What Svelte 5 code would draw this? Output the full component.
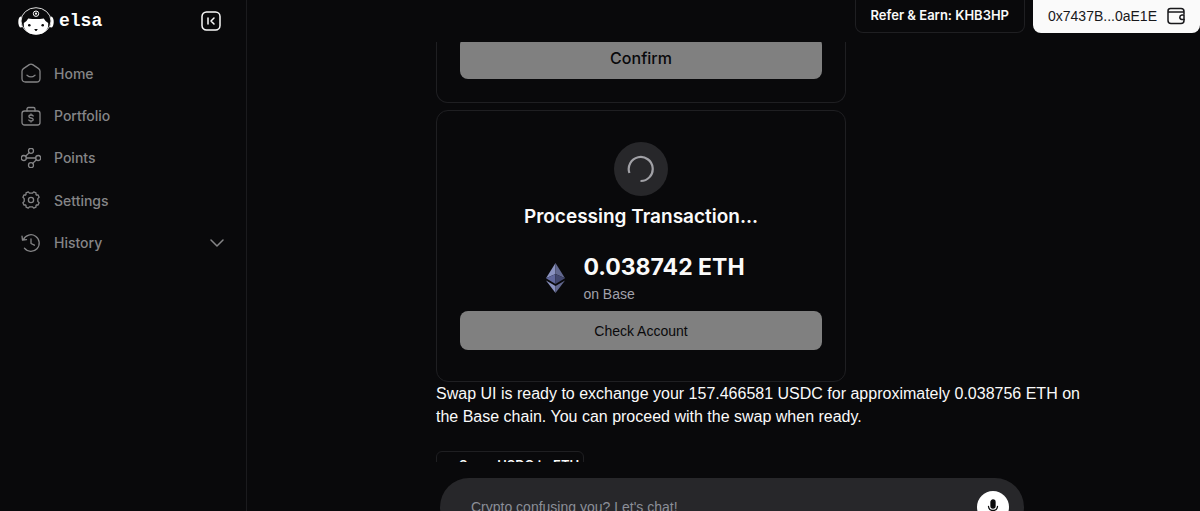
<script>
    let message = "";
    let historyOpen = false;
    let collapsed = false;

    const links = [
        { name: "Home", icon: "home" },
        { name: "Portfolio", icon: "portfolio" },
        { name: "Points", icon: "points" },
        { name: "Settings", icon: "settings" }
    ];

    const swap = {
        amount: "0.038742 ETH",
        chain: "Base",
        text: "Swap UI is ready to exchange your 157.466581 USDC for approximately 0.038756 ETH on the Base chain. You can proceed with the swap when ready."
    };

    function toggleHistory(){
        historyOpen = !historyOpen;
    }
</script>

<div class="page">
<aside class:collapsed>
    <div class="brand">
        <a class="logo" href="#home" aria-label="elsa">
            <svg width="36" height="28" viewBox="0 0 36 28">
                <ellipse cx="2.800" cy="15" rx="2.500" ry="5.500" fill="#fff"/>
                <ellipse cx="33.200" cy="15" rx="2.500" ry="5.500" fill="#fff"/>
                <ellipse cx="18" cy="14" rx="15" ry="13.300" fill="#0a0a0b" stroke="#ddd" stroke-width="1"/>
                <path d="M5.800 16Q8.500 14.800 10.200 11.400Q18 12.600 25.800 11.400Q27.500 14.800 30.200 16Q30.900 20 28.500 23Q25 27.600 18 27.600Q11 27.600 7.500 23Q5.100 20 5.800 16Z" fill="#fff"/>
                <circle cx="18" cy="6.700" r="2.700" fill="none" stroke="#fff" stroke-width="1"/>
                <circle cx="18" cy="6.700" r="1.100" fill="#fff"/>
                <circle cx="11.300" cy="18.200" r="1.300" fill="#0a0a0b"/>
                <circle cx="24.700" cy="18.200" r="1.300" fill="#0a0a0b"/>
                <path d="M16.200 22H19.800L18.500 24H17.500Z" fill="#0a0a0b"/>
            </svg>
            <span>elsa</span>
        </a>
        <button class="collapse" aria-label="Collapse menu" on:click={() => collapsed = !collapsed}>
            <svg width="20" height="20" viewBox="0 0 20 20" fill="none" stroke="currentColor" stroke-width="1.500" stroke-linecap="round" stroke-linejoin="round">
                <rect x="1" y="1" width="18" height="18" rx="4.500"/>
                <path d="M7 7V13M13 7L10 10L13 13"/>
            </svg>
        </button>
    </div>

    <nav>
        {#each links as link}
            <a href="#{link.icon}">
                <svg width="20" height="20" viewBox="0 0 20 20" fill="none" stroke="currentColor" stroke-width="1.300" stroke-linecap="round" stroke-linejoin="round">
                    {#if link.icon == "home"}
                        <path d="M1 8.200Q1 6.600 2.400 5.600L8.300 1.600Q10 .5 11.700 1.600L17.600 5.600Q19 6.600 19 8.200V15.500Q19 19 15.500 19H4.500Q1 19 1 15.500Z"/>
                        <path d="M6 12.200Q10 15.600 14 12.200"/>
                    {:else if link.icon == "portfolio"}
                        <rect x="1" y="5" width="18" height="14" rx="2.500"/>
                        <path d="M6 5V3Q6 1.500 7.500 1.500H12.500Q14 1.500 14 3V5"/>
                        <path d="M12.200 10Q11.800 9 10 9Q7.900 9 7.900 10.500Q7.900 11.700 10 12Q12.200 12.300 12.200 13.500Q12.200 15 10 15Q8.200 15 7.800 14M10 7.900V9M10 15V16.100"/>
                    {:else if link.icon == "points"}
                        <circle cx="10" cy="2.800" r="2.500"/>
                        <circle cx="2.800" cy="10" r="2.500"/>
                        <circle cx="17.200" cy="10" r="2.500"/>
                        <circle cx="10" cy="17.200" r="2.500"/>
                        <path d="M8.300 4.600L4.600 8.200M5.300 10H14.700M15.400 11.800L11.700 15.400"/>
                    {:else}
                        <circle cx="10" cy="10" r="2.600"/>
                        <path d="M8.600 3.200H11.400L12.700 1.900L15 2.900V4.600L15.400 5H17.100L18.100 7.300L16.800 8.600V11.400L18.100 12.700L17.100 15H15.400L15 15.400V17.100L12.700 18.100L11.400 16.800H8.600L7.300 18.100L5 17.100V15.400L4.600 15H2.900L1.900 12.700L3.200 11.400V8.600L1.900 7.300L2.900 5H4.600L5 4.600V2.900L7.300 1.900Z"/>
                    {/if}
                </svg>
                <span>{link.name}</span>
            </a>
        {/each}
        <button aria-expanded={historyOpen} on:click={toggleHistory}>
            <svg width="20" height="20" viewBox="0 0 20 20" fill="none" stroke="currentColor" stroke-width="1.300" stroke-linecap="round" stroke-linejoin="round">
                <path d="M2.400 6.500A8.300 8.300 0 1 1 3.400 15.200M1 3.200L1.500 7.200L5.500 6.700M10 6V10.500L13.400 12.200"/>
            </svg>
            <span>History</span>
            <svg class="chevron" width="14" height="8" viewBox="0 0 14 8" fill="none" stroke="currentColor" stroke-width="1.500" stroke-linecap="round" stroke-linejoin="round">
                <path d="M1 1L7 7L13 1"/>
            </svg>
        </button>
    </nav>
</aside>

<main>
    <header>
        <button class="refer">Refer &amp; Earn: KHB3HP</button>
        <button class="wallet">
            0x7437B...0aE1E
            <svg width="18" height="18" viewBox="0 0 18 18" fill="none" stroke="currentColor" stroke-width="1.500" stroke-linecap="round" stroke-linejoin="round">
                <path d="M17 7V4.500Q17 1.500 14 1.500H3.500Q1 1.500 1 4V13.500Q1 16.500 4 16.500H14Q17 16.500 17 13.500V12.500M1 5H17"/>
                <path d="M17 8H14.800Q12.800 8.300 12.800 10.200Q12.800 12.200 14.800 12.500H17Z"/>
            </svg>
        </button>
    </header>

    <div class="chat">
        <section class="card confirm">
            <button>Confirm</button>
        </section>

        <section class="card status">
            <div class="spinner">
                <svg width="28" height="28" viewBox="0 0 28 28" fill="none" stroke="#a1a1a6" stroke-width="2.200">
                    <path d="M2.400 18A12 12 0 1 1 13.500 26"/>
                </svg>
            </div>
            <h2>Processing Transaction...</h2>
            <div class="token">
                <svg width="19" height="30" viewBox="0 0 19 30">
                    <path d="M9.500 0L0 15.300L9.500 11Z" fill="#8a92c0"/>
                    <path d="M9.500 0L19 15.300L9.500 11Z" fill="#62688f"/>
                    <path d="M0 15.300L9.500 11V21Z" fill="#5f669b"/>
                    <path d="M19 15.300L9.500 11V21Z" fill="#42476f"/>
                    <path d="M0 17.400L9.500 23V30Z" fill="#8a92c0"/>
                    <path d="M19 17.400L9.500 23V30Z" fill="#62688f"/>
                </svg>
                <div>
                    <strong>{swap.amount}</strong>
                    <small>on {swap.chain}</small>
                </div>
            </div>
            <button>Check Account</button>
        </section>

        <p>{swap.text}</p>

        <button class="chip">
            <svg width="8" height="8" viewBox="0 0 8 8" fill="none" stroke="#777"><path d="M1 4L4 1L7 4"/></svg>
            Swap USDC to ETH
        </button>
    </div>

    <div class="dock">
        <form class="composer" on:submit|preventDefault>
            <input type="text" aria-label="Message" bind:value={message} placeholder="Crypto confusing you? Let's chat!">
            <button type="button" aria-label="Speak">
                <svg width="12" height="16" viewBox="0 0 12 16" fill="none" stroke="#0a0a0b" stroke-width="1.300" stroke-linecap="round">
                    <rect x="4" y="1" width="4" height="8" rx="2" fill="#0a0a0b"/>
                    <path d="M1.500 7.500Q2 11.500 6 11.500Q10 11.500 10.500 7.500M6 11.500V14.500"/>
                </svg>
            </button>
        </form>
    </div>
</main>
</div>

<style>
:global(body) {
  margin: 0;
  background: #09090b;
}

.page {
  display: flex;
  height: 100vh;
  overflow: hidden;
  color: #fafafa;
  font-family: "Liberation Sans", Arial, sans-serif;
  font-size: 14px;
}

button {
  font: inherit;
  color: inherit;
  border: none;
  background: none;
  padding: 0;
  cursor: pointer;
}

svg {
  flex: none;
  display: block;
}

nav, .refer, .confirm, h2, strong, .chip {
  font-family: Inter, "Liberation Sans", sans-serif;
}

aside {
  flex: 0 0 247px;
  box-sizing: border-box;
  border-right: 1px solid #1b1b1e;
}

aside.collapsed {
  flex-basis: 64px;
  overflow: hidden;
}

.brand {
  display: flex;
  align-items: center;
  justify-content: space-between;
  height: 42px;
  padding: 0 25px 0 18px;
}

.logo {
  display: flex;
  align-items: center;
  gap: 5px;
  color: #fff;
  text-decoration: none;
  font: bold 18px/24px "Liberation Mono", monospace;
}

nav {
  display: grid;
  grid-template-rows: repeat(5, 1fr);
  height: 212px;
  margin-top: 10px;
}

nav a, nav button {
  display: flex;
  align-items: center;
  gap: 13px;
  padding: 0 22px 0 21px;
  color: #858587;
  font-weight: 500;
  text-decoration: none;
}

.chevron {
  margin-left: auto;
}

main {
  flex: 1;
  min-width: 0;
  display: flex;
  flex-direction: column;
}

header {
  flex: 0 0 42px;
  display: flex;
  justify-content: flex-end;
  align-items: flex-start;
  gap: 8px;
}

header button {
  display: flex;
  align-items: center;
  gap: 10px;
  height: 33px;
  box-sizing: border-box;
  padding: 0 15px 2px;
  border-radius: 0 0 8px 8px;
}

.refer {
  border: 1px solid #1f1f22;
  border-top: none;
  font-size: 13px;
  font-weight: 600;
}

.wallet {
  background: #fafafa;
  color: #18181b;
}

.chat {
  flex: 1;
  min-height: 0;
  overflow: hidden;
  padding: 0 110px 0 189px;
}

.card {
  max-width: 410px;
  box-sizing: border-box;
  border: 1px solid #1f1f22;
  border-radius: 12px;
  padding: 31px 23px;
}

.card > button {
  width: 100%;
  height: 39px;
  border-radius: 8px;
  background: #808080;
  color: #09090b;
}

/* scrolled part of the card sits under the header */
.confirm {
  margin: -5px 0 7px;
  border-top: none;
  border-radius: 0 0 12px 12px;
  padding: 0 23px 23px;
}

.confirm > button {
  height: 42px;
  font-size: 16px;
  font-weight: 500;
}

.status {
  display: flex;
  flex-direction: column;
  align-items: center;
}

.spinner {
  display: grid;
  place-items: center;
  width: 54px;
  height: 54px;
  border-radius: 50%;
  background: #27272a;
}

h2 {
  margin: 7px 0 20px;
  font-size: 19px;
  line-height: 28px;
  font-weight: 600;
}

.token {
  display: flex;
  align-items: center;
  gap: 18px;
  margin-bottom: 6px;
  padding-left: 9px;
}

.token strong {
  display: block;
  font-size: 23px;
  line-height: 32px;
}

.token small {
  display: block;
  font-size: 14px;
  line-height: 22px;
  color: #a1a1aa;
}

p {
  margin: 0 0 23px;
  font-size: 16px;
  line-height: 23px;
}

.chip {
  display: flex;
  align-items: center;
  gap: 4px;
  height: 28px;
  padding: 0 4px 0 10px;
  border: 1px solid #1f1f22;
  border-radius: 6px;
  font-size: 13px;
  font-weight: 600;
}

.dock {
  flex: 0 0 49px;
  min-height: 0;
  box-sizing: border-box;
  padding: 16px 176px 0 193px;
}

.composer {
  display: flex;
  align-items: center;
  height: 58px;
  box-sizing: border-box;
  padding: 0 15px 0 31px;
  border-radius: 29px;
  background: #27272a;
}

.composer input {
  flex: 1;
  min-width: 0;
  padding: 0;
  border: none;
  outline: none;
  background: none;
  color: #fafafa;
  font: inherit;
}

.composer input::placeholder {
  color: #8b8f98;
}

.composer button {
  display: grid;
  place-items: center;
  width: 32px;
  height: 32px;
  border-radius: 50%;
  background: #fff;
}
</style>
